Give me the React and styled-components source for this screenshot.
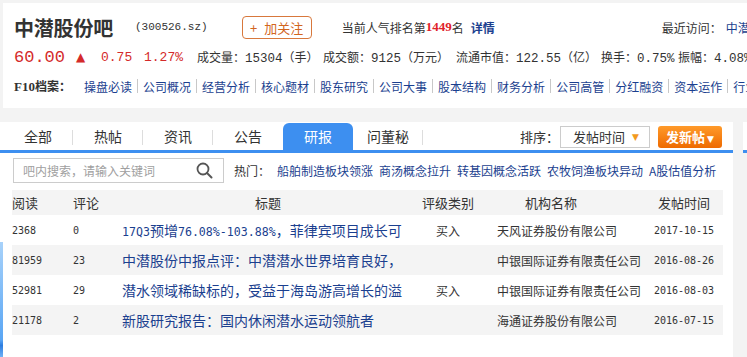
import React from 'react'
import styled, { createGlobalStyle } from 'styled-components'

const cjk = `"Noto Sans CJK SC", "Liberation Sans", sans-serif`
const mono = `"Liberation Mono", "Noto Sans CJK SC", monospace`
const sunMono = `"DejaVu Sans Mono", "Noto Sans CJK SC", monospace`
const navy = '#1b3f8f'
const red = '#d42a2a'
const blue = '#3d8ff0'
const gray = '#f3f3f3'

const GlobalStyle = createGlobalStyle`
  html, body {
    margin: 0;
    padding: 0;
    overflow: hidden;
    background: ${gray};
  }
  body {
    font-family: ${cjk};
    color: #333;
  }
`

const tabs = ['全部', '热帖', '资讯', '公告', '研报', '问董秘']
const f10 = ['操盘必读', '公司概况', '经营分析', '核心题材', '股东研究', '公司大事', '股本结构', '财务分析', '公司高管', '分红融资', '资本运作', '行业研究']
const hots = ['船舶制造板块领涨', '商汤概念拉升', '转基因概念活跃', '农牧饲渔板块异动', 'A股估值分析']

const rows = [
  { read: '2368', reply: '0', title: '17Q3预增76.08%-103.88%，菲律宾项目成长可', rate: '买入', org: '天风证券股份有限公司', date: '2017-10-15' },
  { read: '81959', reply: '23', title: '中潜股份中报点评：中潜潜水世界培育良好，', rate: '', org: '中银国际证券有限责任公司', date: '2016-08-26' },
  { read: '52981', reply: '29', title: '潜水领域稀缺标的，受益于海岛游高增长的溢', rate: '买入', org: '中银国际证券有限责任公司', date: '2016-08-03' },
  { read: '21178', reply: '2', title: '新股研究报告：国内休闲潜水运动领航者', rate: '', org: '海通证券股份有限公司', date: '2016-07-15' },
]

// half-width runs get a narrow monospace face, like the original page font
const splitLatin = text =>
  text.split(/([\x20-\x7e]+)/).filter(Boolean).map((part, i) =>
    /^[\x20-\x7e]+$/.test(part) ? <Latin key={i}>{part}</Latin> : part
  )

const SearchIcon = () => (
  <svg width="17" height="17" viewBox="0 0 17 17">
    <circle cx="7" cy="7" r="5.5" fill="none" stroke="#555" strokeWidth="1.8" />
    <line x1="11" y1="11" x2="15.5" y2="15.5" stroke="#555" strokeWidth="2" strokeLinecap="round" />
  </svg>
)

export default function App() {
  return (
    <Page>
      <GlobalStyle />
      <InfoPanel>
        <TitleRow>
          <BarName>中潜股份吧</BarName>
          <Code>(300526.sz)</Code>
          <FollowButton><span>+</span>加关注</FollowButton>
          <Rank>
            当前人气排名第<RankNum>1449</RankNum>名
            <Detail>详情</Detail>
          </Rank>
          <Recent>
            最近访问：<RecentLink>中潜股份</RecentLink>
          </Recent>
        </TitleRow>
        <QuoteRow>
          <Price>60.00</Price>
          <Arrow>▲</Arrow>
          <Change $w={43}>0.75</Change>
          <Change $w={53}>1.27%</Change>
          <Stat $w={126}>成交量：<Num>15304</Num>（手）</Stat>
          <Stat $w={133}>成交额：<Num>9125</Num>（万元）</Stat>
          <Stat $w={145}>流通市值：<Num>122.55</Num>（亿）</Stat>
          <Stat $w={77}>换手：<Num>0.75%</Num></Stat>
          <Stat>振幅：<Num>4.08%</Num></Stat>
        </QuoteRow>
        <F10Row>
          <F10Label><span>F10</span>档案：</F10Label>
          {f10.map((item, i) => (
            <React.Fragment key={item}>
              {i > 0 && <Sep />}
              <F10Link>{item}</F10Link>
            </React.Fragment>
          ))}
        </F10Row>
      </InfoPanel>

      <BoardRow>
        <Board>
          <TabBar>
            <TabList>
              {tabs.map((t, i) => (
                <Tab key={t} $active={t === '研报'} $sep={i < 3 || t === '问董秘'}>{t}</Tab>
              ))}
            </TabList>
            <SortLabel>排序：</SortLabel>
            <Select>
              发帖时间<Caret>▼</Caret>
            </Select>
            <PostButton>发新帖<small>▼</small></PostButton>
          </TabBar>

          <SearchRow>
            <SearchBox>
              <span>吧内搜索，请输入关键词</span>
              <SearchIcon />
            </SearchBox>
            <HotLabel>热门：</HotLabel>
            {hots.map(h => <HotLink key={h}>{h}</HotLink>)}
          </SearchRow>

          <Table>
            <HeadRow>
              <Cell>阅读</Cell>
              <Cell>评论</Cell>
              <Cell $center>标题</Cell>
              <Cell $center>评级类别</Cell>
              <Cell $pad={43}>机构名称</Cell>
              <Cell $center>发帖时间</Cell>
            </HeadRow>
            {rows.map((r, i) => (
              <BodyRow key={r.read} $alt={i % 2 === 1}>
                <NumCell>{r.read}</NumCell>
                <NumCell>{r.reply}</NumCell>
                <TitleCell>{splitLatin(r.title)}</TitleCell>
                <Cell $center>{r.rate}</Cell>
                <Cell $pad={15}>{r.org}</Cell>
                <NumCell $center>{r.date}</NumCell>
              </BodyRow>
            ))}
          </Table>
        </Board>
        <SidePanel />
      </BoardRow>
      <FloatTab />
    </Page>
  )
}

const Page = styled.div`
  position: relative;
  width: 747px;
  height: 357px;
  padding-top: 3px;
  box-sizing: border-box;
  overflow: hidden;
`

const InfoPanel = styled.div`
  margin-left: 3px;
  height: 105px;
  padding: 9px 0 0 11px;
  box-sizing: border-box;
  background: #fff;
  overflow: hidden;
  white-space: nowrap;
`

const TitleRow = styled.div`
  display: flex;
  align-items: center;
  height: 30px;

  & > * {
    flex-shrink: 0;
  }
`

const BarName = styled.h1`
  margin: 0;
  font-size: 20px;
  font-weight: bold;
  color: #333;
  letter-spacing: -0.2px;
`

const Code = styled.span`
  margin-left: 22px;
  font-family: ${mono};
  font-size: 11px;
  color: #333;
`

const FollowButton = styled.button`
  margin-left: 34px;
  width: 70px;
  height: 23px;
  border: 1px solid #d8783c;
  border-radius: 4px;
  background: #fff;
  color: #d2651e;
  font-family: ${cjk};
  font-size: 13px;
  padding: 0;
  cursor: pointer;

  span {
    margin-right: 7px;
  }
`

const Rank = styled.span`
  margin-left: 30px;
  font-size: 12px;
  color: #333;
  display: flex;
  align-items: center;
`

const RankNum = styled.b`
  color: #e0222a;
  font-family: "Liberation Serif", serif;
  font-size: 13px;
`

const Detail = styled.b`
  margin-left: 7px;
  color: ${navy};
  font-size: 12px;
`

const Recent = styled.span`
  margin-left: 167px;
  font-size: 12px;
  color: #333;
`

const RecentLink = styled.span`
  margin-left: 4px;
  color: ${navy};
`

const QuoteRow = styled.div`
  display: flex;
  align-items: center;
  height: 30px;
  font-size: 12px;

  & > * {
    flex-shrink: 0;
  }
`

const Price = styled.span`
  width: 62px;
  font-family: ${mono};
  font-size: 17px;
  color: ${red};
`

const Arrow = styled.span`
  width: 25px;
  color: ${red};
  font-size: 12px;
  font-family: "DejaVu Sans", sans-serif;
`

const Change = styled.span`
  width: ${p => p.$w}px;
  font-family: ${mono};
  font-size: 13px;
  color: ${red};
`

const Stat = styled.span`
  ${p => (p.$w ? `width: ${p.$w}px;` : '')}
  font-size: 12px;
  color: #333;
`

const Num = styled.span`
  font-family: ${mono};
  font-size: 12.5px;
`

const F10Row = styled.div`
  display: flex;
  align-items: center;
  height: 28px;
  font-size: 12px;

  & > * {
    flex-shrink: 0;
  }
`

const F10Label = styled.b`
  width: 70px;
  color: #333;

  span {
    font-family: "Liberation Serif", serif;
    font-size: 13px;
  }
`

const F10Link = styled.span`
  color: ${navy};
`

const Sep = styled.i`
  width: 1px;
  height: 14px;
  margin: 0 5px;
  background: #c8c8c8;
`

const BoardRow = styled.div`
  display: flex;
  margin-top: 14px;
`

const Board = styled.div`
  width: 733px;
  height: 235px;
  background: #fff;
  flex-shrink: 0;
`

const SidePanel = styled.div`
  margin-left: 10px;
  width: 40px;
  height: 28px;
  background: #fff;
  border-bottom: 3px solid ${blue};
`

const TabBar = styled.div`
  display: flex;
  align-items: center;
  height: 27px;
  padding: 1px 11px 0 3px;
  border-bottom: 3px solid ${blue};
`

const TabList = styled.div`
  display: flex;
  align-self: flex-end;
  margin-right: auto;
`

const Tab = styled.div`
  position: relative;
  width: 70px;
  height: 27px;
  line-height: 27px;
  text-align: center;
  font-size: 14px;
  color: ${p => (p.$active ? '#fff' : '#333')};
  background: ${p => (p.$active ? blue : 'transparent')};
  border-radius: ${p => (p.$active ? '6px 6px 0 0' : '0')};

  &::after {
    content: '';
    display: ${p => (p.$sep ? 'block' : 'none')};
    position: absolute;
    right: 0;
    top: 7px;
    width: 1px;
    height: 15px;
    background: #ddd;
  }
`

const SortLabel = styled.span`
  font-size: 13px;
  color: #333;
  margin-right: 1px;
`

const Select = styled.div`
  display: flex;
  align-items: center;
  justify-content: space-between;
  width: 90px;
  height: 22px;
  box-sizing: border-box;
  padding: 0 10px 0 12px;
  border: 1px solid #ccc;
  font-size: 13px;
  color: #333;
`

const Caret = styled.span`
  color: #f39a1e;
  font-size: 9px;
  font-family: "DejaVu Sans", sans-serif;
`

const PostButton = styled.div`
  margin-left: 8px;
  width: 64px;
  height: 22px;
  line-height: 22px;
  text-align: center;
  border-radius: 3px;
  background: linear-gradient(#ff9a2a, #ee6a00);
  color: #fff;
  font-size: 13px;
  font-weight: bold;

  small {
    margin-left: 2px;
    font-size: 9px;
    font-family: "DejaVu Sans", sans-serif;
  }
`

const SearchRow = styled.div`
  display: flex;
  align-items: center;
  padding: 5px 0 0 13px;
  font-size: 12px;
`

const SearchBox = styled.div`
  display: flex;
  align-items: center;
  justify-content: space-between;
  width: 211px;
  height: 25px;
  box-sizing: border-box;
  padding: 0 10px 0 9px;
  border: 1px solid #ccc;
  color: #a0a0a0;
  font-size: 12px;
`

const HotLabel = styled.span`
  margin-left: 10px;
  margin-right: 1px;
  color: #333;
`

const HotLink = styled.span`
  margin-left: 6px;
  color: ${navy};
`

const Table = styled.div`
  margin: 7px 0 0 12px;
  width: 711px;
`

const columns = '61px 49px 292px 68px 163px 78px'

const HeadRow = styled.div`
  display: grid;
  grid-template-columns: ${columns};
  height: 25px;
  align-items: center;
  background: #f4f4f4;
  font-size: 13px;
  color: #333;
`

const BodyRow = styled.div`
  display: grid;
  grid-template-columns: ${columns};
  height: 30px;
  align-items: center;
  background: ${p => (p.$alt ? '#f4f4f4' : '#fff')};
  font-size: 12px;
  color: #333;
`

const Cell = styled.div`
  white-space: nowrap;
  overflow: hidden;
  text-align: ${p => (p.$center ? 'center' : 'left')};
  padding-left: ${p => p.$pad || 0}px;
`

const NumCell = styled(Cell)`
  font-family: ${sunMono};
  font-size: 10px;
  color: #333;
`

const TitleCell = styled.div`
  width: 286px;
  white-space: nowrap;
  overflow: hidden;
  font-size: 14px;
  color: ${navy};
`

const Latin = styled.span`
  font-family: ${sunMono};
  font-size: 11.6px;
`

const FloatTab = styled.div`
  position: absolute;
  left: 0;
  top: 242px;
  width: 3px;
  height: 115px;
  background: linear-gradient(#a8d2fa, #5aa6f4 85%, #2d7de0 90%, #6fb2f6);
`
